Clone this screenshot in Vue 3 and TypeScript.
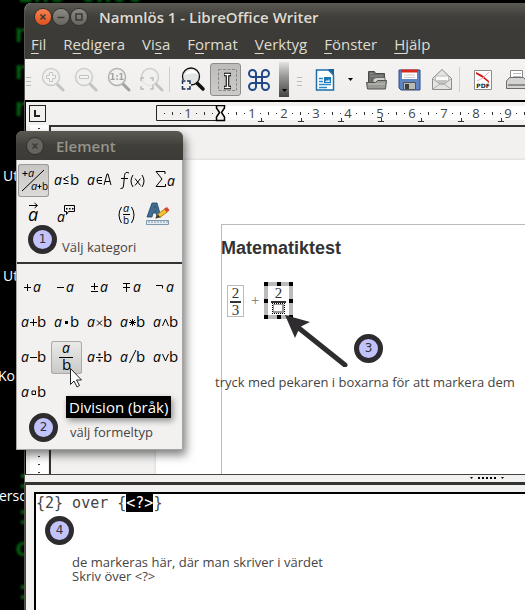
<script setup lang="ts">
import { onMounted, ref } from 'vue'

interface Glyph { t: string; x: number; y: number; s: number; up?: boolean }
interface Tile { name: string; glyphs: Glyph[]; path?: string; fill?: string; kind?: string; active?: boolean }

const A = (x = 4, y = 21, s = 14): Glyph => ({ t: 'a', x, y, s })
const B = (x = 20, y = 21, s = 15): Glyph => ({ t: 'b', x, y, s, up: true })

const categories: Tile[] = [
  { name: 'Unära/binära operatorer', active: true, path: 'M5 27 27 6M5.500 9.500h5M8 7v5M20.500 22.500h4M22.500 20.500v4', glyphs: [A(11, 13, 11), A(14, 26, 11), B(25, 26, 10)] },
  { name: 'Relationer', path: 'M18.500 12.500 13.500 15l5 2.500M13.500 19.500h5', glyphs: [A(4), B(20)] },
  { name: 'Mängdoperationer', path: 'M19 13.500h-3q-2 0-2 3t2 3h3M14 16.500h5M21 21l3-11h1l3 11M22 17.500h5', glyphs: [A(4)] },
  { name: 'Funktioner', path: 'M13 9q-4-2-4.500 2.500L7.500 22q0 3-3 2.500M5 14.500h7M17 11q-4 6 0 12M26 11q4 6 0 12M19 14.500l5.500 7M24.500 14.500l-5.500 7', glyphs: [] },
  { name: 'Operatorer', path: 'M16 10V7.500H7l6 7.500-6 7.500h9.500V20', glyphs: [A(18, 22)] },
  { name: 'Attribut', path: 'M12 6.500h8M17.500 4l3 2.500-3 2.500', glyphs: [A(11, 22, 18)] },
  { name: 'Övrigt', kind: 'bubble', glyphs: [A(7, 23)] },
  { name: '', glyphs: [] },
  { name: 'Klamrar', path: 'M5.500 8q-5 8 0 16M15.500 8q5 8 0 16M7 15.500h7', glyphs: [A(7, 13, 11), B(7, 25, 10)] },
  { name: 'Format', kind: 'format', glyphs: [] },
]

const formulas: Tile[] = [
  { name: 'Plus', path: 'M7 16.500h7M10.500 13v7', glyphs: [A(16)] },
  { name: 'Minus', path: 'M7 16.500h7', glyphs: [A(16)] },
  { name: 'Plus/minus', path: 'M8 15.500h7M11.500 12v7M8 20.500h7', glyphs: [A(17)] },
  { name: 'Minus/plus', path: 'M7 12.500h7M7 16.500h7M10.500 13v8', glyphs: [A(17)] },
  { name: 'Booleskt NOT', path: 'M7 14.500h6.500v3', glyphs: [A(17)] },
  { name: 'Addition', path: 'M13 16.500h7M16.500 13v7', glyphs: [A(), B()] },
  { name: 'Multiplikation (punkt)', fill: 'M15 15h3v3h-3z', glyphs: [A(), B()] },
  { name: 'Multiplikation (x)', path: 'M14 14.500l5 5M19 14.500l-5 5', glyphs: [A(), B()] },
  { name: 'Multiplikation (*)', path: 'M13 16.500h7M16.500 13v7M14 14l5 5M19 14l-5 5', glyphs: [A(), B()] },
  { name: 'Booleskt AND', path: 'M13.500 20 16.500 13l3 7', glyphs: [A(), B()] },
  { name: 'Subtraktion', path: 'M13 16.500h7', glyphs: [A(), B()] },
  { name: 'Division (bråk)', active: true, path: 'M9 16.500h14', glyphs: [A(12, 12), B(12, 29)] },
  { name: 'Division', path: 'M13 16.500h7', fill: 'M15.500 12.500h2v2h-2zM15.500 18.500h2v2h-2z', glyphs: [A(), B()] },
  { name: 'Division (snedstreck)', path: 'M13.500 22 20 9', glyphs: [A(), B()] },
  { name: 'Booleskt OR', path: 'M13.500 13l3 7 3-7', glyphs: [A(), B()] },
  { name: 'Konkatenera', path: 'M15 15h3.500v3.500h-3.500z', glyphs: [A(), B()] },
]

const menus: [string, string, string][] = [
  ['', 'F', 'il'], ['R', 'e', 'digera'], ['Vi', 's', 'a'], ['F', 'o', 'rmat'],
  ['', 'V', 'erktyg'], ['', 'F', 'önster'], ['', 'H', 'jälp'],
]

const unit = 32
const marks = Array.from({ length: 14 }, (_, i) => i + 1)
const tabs = Array.from({ length: 10 }, (_, i) => 105 + i * 40)

const command = ref('{2} over {<?>}')
const editor = ref<HTMLTextAreaElement | null>(null)
onMounted(() => {
  editor.value?.focus()
  editor.value?.setSelectionRange(10, 13)
})
</script>

<template>
  <main class="desktop">
    <div class="matrix" aria-hidden="true">
      <span class="g g-top">Ine 0x00</span>
      <span class="g g1">n</span><span class="g g2">n</span><span class="g g3">n</span>
      <span class="g g4">:</span><span class="g g5">:</span><span class="g g6">c</span><span class="g g7">:</span>
    </div>
    <span class="file f1">Ut</span>
    <span class="file f2">Ut</span>
    <span class="file f3">Ko</span>
    <span class="file f4">ersor</span>

    <section class="writer">
      <header class="titlebar">
        <button class="wbtn close" aria-label="Stäng"><svg viewBox="0 0 16 16"><path d="M5.500 5.500l5 5M10.500 5.500l-5 5" /></svg></button>
        <button class="wbtn" aria-label="Minimera"><svg viewBox="0 0 16 16"><path d="M4.500 8.500h7" /></svg></button>
        <button class="wbtn" aria-label="Maximera"><svg viewBox="0 0 16 16"><path d="M5 5h6v6H5z" /></svg></button>
        <h1>Namnlös 1 - LibreOffice Writer</h1>
      </header>

      <nav class="menubar">
        <button v-for="m in menus" :key="m.join('')">{{ m[0] }}<u>{{ m[1] }}</u>{{ m[2] }}</button>
      </nav>

      <div class="toolbar">
        <i class="grip"></i>
        <button class="tool dim" aria-label="Zooma in">
          <svg viewBox="0 0 32 32"><path class="handle" d="M20 20l6 6" /><circle cx="14" cy="13" r="8.500" /><path class="sign" d="M12.500 8.500h3v3h3v3h-3v3h-3v-3h-3v-3h3z" /></svg>
        </button>
        <button class="tool dim" aria-label="Zooma ut">
          <svg viewBox="0 0 32 32"><path class="handle" d="M20 20l6 6" /><circle cx="14" cy="13" r="8.500" /><path class="sign" d="M9.500 11.500h9v3h-9z" /></svg>
        </button>
        <button class="tool dim mid" aria-label="Zooma 1:1">
          <svg viewBox="0 0 32 32"><path class="handle" d="M20 20l6 6" /><circle cx="14" cy="13" r="8.500" /><text x="14" y="16" text-anchor="middle">1:1</text></svg>
        </button>
        <button class="tool dim" aria-label="Visa allt">
          <svg viewBox="0 0 32 32"><path class="handle" d="M20 20l6 6" /><circle cx="14" cy="13" r="8.500" /><path d="M4 14h12v12H4z" fill="#f2f1f0" opacity=".7" /><path class="corner" d="M5 17v-3h3M14 14h3v3M5 22v3h3M14 25h3v-3" /></svg>
        </button>
        <i class="rule"></i>
        <button class="tool" aria-label="Zoom">
          <svg viewBox="0 0 32 32">
            <path d="M20 19l6 6" stroke="#111" stroke-width="3.500" stroke-linecap="round" />
            <circle cx="14" cy="12.500" r="8.500" fill="#e4e6e6" stroke="#111" stroke-width="1.300" />
            <path d="M8 11q2-5 8-5 4 1 5 4-6-2-13 1z" fill="#fff" />
            <path d="M4 16h10v10H4z" fill="#f2f1f0" />
            <path d="M5.500 20v-3h3M10 17h3v3M5.500 22v3h3M10 25h3v-3" fill="none" stroke="#1d2f55" stroke-width="1.500" />
          </svg>
        </button>
        <button class="tool pressed" aria-label="Formelmarkör" aria-pressed="true">
          <svg viewBox="0 0 32 32">
            <path d="M7.500 5.500h18v21h-18z" fill="none" stroke="#888" stroke-dasharray="3 1.500" />
            <path d="M13 10.500h3l.5 1 .5-1h3M16.500 10.500v13M13 23.500h3l.5-1 .5 1h3" fill="none" stroke="#000" stroke-width="3.500" />
            <path d="M13.500 10.500H16l.5 1 .5-1h2.500M16.500 10.500v13M13.500 23.500H16l.5-1 .5 1h2.500" fill="none" stroke="#fff" stroke-width="1.400" />
          </svg>
        </button>
        <button class="tool" aria-label="Symboler">
          <svg viewBox="0 0 32 32"><path d="M13 13V9.500A3.500 3.500 0 1 0 9.500 13H22.500A3.500 3.500 0 1 0 19 9.500V22.500A3.500 3.500 0 1 0 22.500 19H9.500A3.500 3.500 0 1 0 13 22.500z" fill="none" stroke="#204a87" stroke-width="2" /></svg>
        </button>
        <button class="more" aria-label="Fler verktyg"><svg viewBox="0 0 5 3"><path d="M0 0h5L2.500 3z" /></svg></button>
        <i class="grip second"></i>
        <button class="tool" aria-label="Nytt">
          <svg viewBox="0 0 32 32">
            <path d="M7.500 6h12l5 5v15h-17z" fill="#fff" stroke="#1b6ea8" stroke-width="1.500" />
            <path d="M19 5h6v6z" fill="#17649c" />
            <path d="M10 14.500h4M10 17.500h4M10 20.500h12M10 23.500h8" stroke="#2b87c4" stroke-width="1.500" />
            <path d="M15 13h7v6h-7z" fill="#1b78b6" /><path d="M16 18l2-2 1 1 1-2 1 3z" fill="#d8eefa" />
          </svg>
        </button>
        <button class="caret" aria-label="Nytt, fler val"><svg viewBox="0 0 5 3"><path d="M0 0h5L2.500 3z" /></svg></button>
        <button class="tool" aria-label="Öppna">
          <svg viewBox="0 0 32 32">
            <path d="M8.500 22V7.500h6l1 2h9V22z" fill="#6c6d69" stroke="#494a47" />
            <path d="M10 9.500h3M10 12h13" stroke="#8d8e8a" />
            <path d="M16 13.500h9V20H13v-5z" fill="#d0d1cd" stroke="#666" />
            <path d="M6.500 18.500h9l2-2h9l-1 8.500h-18z" fill="#999a96" stroke="#51524f" /><path d="M8 20h17" stroke="#c2c3bf" />
          </svg>
        </button>
        <button class="tool" aria-label="Spara">
          <svg viewBox="0 0 32 32">
            <path d="M6 6h21v20H8l-2-2z" fill="#5e84c4" stroke="#2b4a83" />
            <path d="M9 6h15v9H9z" fill="#fff" /><path d="M8 5.500h17v3H8z" fill="#d8291f" />
            <path d="M11 11h11M11 13.500h11" stroke="#c8c8c8" />
            <path d="M10.500 18.500h12v7h-12z" fill="#b9bbb8" stroke="#555" /><path d="M12 20h4v5h-4z" fill="#3d3f3d" />
          </svg>
        </button>
        <button class="tool" aria-label="E-post">
          <svg viewBox="0 0 32 32">
            <path d="M6.500 14.500 16 5.500l9.500 9v11h-19z" fill="#e4e4e2" stroke="#8b8c89" />
            <path d="M9.500 17v-5h13v5L16 21z" fill="#fafafa" stroke="#bbb" />
            <path d="M10 16h12l-4 4h-4z" fill="#c4c4c2" />
            <path d="M7 25l7-5h4l7 5M7 15l7 5M25 15l-7 5" fill="none" stroke="#aaa" />
          </svg>
        </button>
        <i class="rule"></i>
        <button class="tool" aria-label="Exportera som PDF">
          <svg viewBox="0 0 32 32">
            <path d="M7.500 6.500h17v19h-17z" fill="#fff" stroke="#8c8c8c" />
            <path d="M9 8l6 3 7 6v2l-6-5-7-4z" fill="#d11d1d" /><path d="M22 8l-6 6-6 3" stroke="#eeb0b0" fill="none" />
            <text x="16" y="24" font-size="6" font-weight="700" text-anchor="middle">PDF</text>
          </svg>
        </button>
        <button class="tool" aria-label="Skriv ut">
          <svg viewBox="0 0 32 32">
            <path d="M10.500 15V6.500h12V15" fill="#fff" stroke="#8b8b8b" /><path d="M13 9.500h8M13 12.500h8" stroke="#bbb" />
            <path d="M6.500 17l3-3.500h14l3 3.500v7.500h-20z" fill="#d4d4d2" stroke="#6c6c6a" /><path d="M8 21h17" stroke="#777" stroke-width="1.500" />
          </svg>
        </button>
      </div>

      <div class="workspace">
        <div class="ruler-row">
          <button class="tabstop" aria-label="Tabbtyp"><svg viewBox="0 0 15 15"><path d="M5 4v6h5" /></svg></button>
          <svg class="ruler" width="371" height="20" aria-hidden="true">
            <path d="M65 1h306v14H65z" fill="#fff" />
            <path d="M65 .5H.5v15H65" fill="none" stroke="#222" />
            <g v-for="n in marks" :key="n" :transform="`translate(${n * unit - 32} 0)`">
              <path class="tick" d="M8 8h1v1H8zM16 7h1v3h-1zM24 8h1v1h-1z" />
            </g>
            <text x="32" y="13">1</text>
            <text v-for="n in 9" :key="n" :x="64 + n * unit" y="13">{{ n }}</text>
            <path v-for="x in tabs" :key="x" class="tab" :d="`M${x - 3} 16.500h6M${x}.5 13v3`" />
            <path d="M60.500.5h8v2.500l-3 4.500 3 4.500v3.500h-8V12l3-4.500-3-4.500z" fill="#f2f1f0" stroke="#000" stroke-width="1.500" />
          </svg>
        </div>
        <div class="doc-row">
          <div class="vruler"><i></i></div>
          <div class="canvas">
            <article class="page">
              <div class="text-area">
                <h2>Matematiktest</h2>
                <div class="formula">
                  <span class="frac"><span>2</span><span class="den">3</span></span>
                  <span class="plus">+</span>
                  <span class="frac object">
                    <span>2</span><span class="den"><i class="slot"></i></span>
                    <i v-for="h in 8" :key="h" class="knob" :class="`k${h}`"></i>
                  </span>
                </div>
              </div>
            </article>
          </div>
        </div>
      </div>

      <div class="splitter">
        <svg viewBox="0 0 35 3"><path d="M0 0h3L1.500 2zM8 0h2v2H8zM12 0h2v2h-2zM16 0h2v2h-2zM20 0h2v2h-2zM24 0h2v2h-2zM31 0h3l-1.500 2z" /></svg>
      </div>
      <div class="command">
        <textarea ref="editor" v-model="command" aria-label="Formelkommando" spellcheck="false"></textarea>
      </div>
    </section>

    <aside class="palette">
      <header class="titlebar">
        <button class="wbtn" aria-label="Stäng Element"><svg viewBox="0 0 16 16"><path d="M5.500 5.500l5 5M10.500 5.500l-5 5" /></svg></button>
        <h2>Element</h2>
      </header>
      <div v-for="(group, gi) in [categories, formulas]" :key="gi" class="tiles">
        <template v-for="(tile, ti) in group" :key="ti">
          <span v-if="!tile.name"></span>
          <button v-else :class="{ active: tile.active }" :aria-label="tile.name">
            <svg viewBox="1 1 32 32">
              <text v-for="(g, k) in tile.glyphs" :key="k" :x="g.x" :y="g.y" :font-size="g.s" :class="{ up: g.up }">{{ g.t }}</text>
              <path v-if="tile.path" :d="tile.path" class="line" />
              <path v-if="tile.fill" :d="tile.fill" />
              <template v-if="tile.kind === 'bubble'">
                <path class="line" d="M14.500 6.500h10v6h-6l-2 3v-3h-2z" /><path d="M16 9h1.500v1.500H16zM19 9h1.500v1.500H19zM22 9h1.500v1.500H22z" />
              </template>
              <template v-if="tile.kind === 'format'">
                <path d="M-2 18 3 4h5l4 14H8l-1-4H4l-1 4zM5 11h2L6 7z" fill="#3f6d92" stroke="#1e4262" stroke-width=".8" />
                <path d="M-2.500 21.500h22v4h-22z" fill="#e3edf3" stroke="#7e99ab" /><path d="M0 22v2M3 22v2M6 22v2M9 22v2M12 22v2M15 22v2M18 22v2" stroke="#7e99ab" />
                <path d="M7 19l2-4 8-6 2.500 3-8 6z" fill="#f4c430" stroke="#a07010" stroke-width=".8" /><path d="M15 10l3-2 2.500 3-3 2z" fill="#d9452f" /><path d="M6 19.500l3-4 2 2.500z" fill="#333" />
              </template>
            </svg>
          </button>
        </template>
      </div>
    </aside>

    <div class="tooltip" role="tooltip">Division (bråk)</div>
    <svg class="pointer" viewBox="0 0 13 21" aria-hidden="true"><path d="M1.500 1.500v16l3.500-3.500 3 6 2.500-1.500-3-5.500h5z" /></svg>

    <svg class="arrow" viewBox="0 0 64 52" aria-hidden="true"><path d="M10 10l50 40" class="shaft" /><path d="M0 0l25 7-10 5-5 11z" /></svg>
    <b class="badge b1">1</b><p class="note n1">Välj kategori</p>
    <b class="badge b2">2</b><p class="note n2">välj formeltyp</p>
    <b class="badge b3">3</b><p class="note n3">tryck med pekaren i boxarna för att markera dem</p>
    <b class="badge b4">4</b><p class="note n4">de markeras här, där man skriver i värdet<br />Skriv över &lt;?&gt;</p>
  </main>
</template>

<style>
body { margin: 0; background: #000; }
</style>

<style scoped>
* { box-sizing: border-box; }
.desktop { position: relative; min-height: 100vh; overflow: hidden; background: #000; font-family: "Open Sans", "Noto Sans", sans-serif; font-size: 15px; }
button { margin: 0; padding: 0; border: 0; background: none; font: inherit; color: inherit; }
h1, h2, p { margin: 0; }
svg { display: block; }

.g { position: absolute; left: 15px; color: #008215; font: bold 26px/30px "Liberation Mono", monospace; filter: blur(1px); opacity: .75; }
.g-top { top: -20px; left: 18px; white-space: pre; }
.g1 { top: 20px; } .g2 { top: 57px; } .g3 { top: 94px; }
.g4 { top: 466px; } .g5 { top: 502px; } .g6 { top: 534px; } .g7 { top: 577px; }
.file { position: absolute; left: 0; color: #fff; font-size: 14px; line-height: 20px; }
.f1 { left: 3px; top: 166px; } .f2 { left: 3px; top: 266px; } .f3 { left: -2px; top: 366px; } .f4 { left: -1px; top: 486px; }

.writer { position: absolute; inset: 3px 0 0 24px; display: flex; flex-direction: column; overflow: hidden; border-left: 1px solid #55544e; border-radius: 7px 0 0 0; background: #f2f1f0; }
.titlebar { display: flex; align-items: center; flex: none; height: 28px; padding-left: 10px; gap: 2px; background: linear-gradient(#5a5952, #403f3a 50%, #3c3b37); color: #dfdbd2; }
.titlebar h1 { margin-left: 10px; font-size: 15px; font-weight: 600; line-height: 20px; white-space: nowrap; }
.wbtn { width: 16px; height: 16px; border-radius: 50%; background: linear-gradient(#8b8a83, #66655f); box-shadow: 0 0 0 1px #33322e; }
.wbtn path { fill: none; stroke: #3a3935; stroke-width: 1.500; }
.wbtn.close { background: linear-gradient(#f5844f, #e0501b); }
.menubar { display: flex; flex: none; height: 28px; padding-left: 6px; gap: 17px; background: #3c3b37; color: #dfdbd2; line-height: 26px; }
.menubar button { display: block; height: 26px; }
.menubar u { text-underline-offset: 3px; text-decoration-thickness: 1px; }

.toolbar { display: flex; align-items: center; flex: none; height: 41px; background: linear-gradient(#f4f3f2, #efeeec); }
.toolbar > * { flex: none; }
.grip { width: 5px; height: 9px; margin: 4px 5px 0 1px; background: repeating-linear-gradient(#bbb 0 1px, transparent 1px 4px); }
.grip.second { margin: 4px 6px 0 8px; }
.tool { display: grid; place-items: center; width: 33px; height: 33px; }
.tool svg { width: 32px; height: 32px; }
.tool text { font-family: "DejaVu Sans", sans-serif; fill: #222; }
.dim { opacity: .5; }
.dim circle { fill: #f0f0ef; stroke: #aaa; stroke-width: 1.500; }
.dim .handle { stroke: #999; stroke-width: 3; stroke-linecap: round; }
.dim .sign { fill: #fafafa; stroke: #999; }
.dim .corner { fill: none; stroke: #888; stroke-width: 1.500; }
.dim.mid { opacity: .9; }
.dim.mid text { font-size: 8px; font-weight: 700; fill: #999; }
.rule { width: 8px; height: 25px; background: linear-gradient(90deg, transparent 1px, #d0cfcd 1px 2px, transparent 2px); }
.pressed { width: 31px; margin: 0 1px; border: 1px solid #8d8c8a; border-radius: 3px; background: linear-gradient(#bdbcba, #cccbc9); }
.more { display: flex; align-items: flex-end; justify-content: center; width: 10px; height: 35px; margin-left: 4px; padding-bottom: 5px; background: linear-gradient(#e2e2e1, #9a9a99 40%, #444); }
.more svg, .caret svg { width: 5px; height: 3px; }
.caret { display: grid; place-items: center; width: 18px; height: 33px; }

.workspace { display: flex; flex-direction: column; flex: none; border-top: 2px solid #000; border-left: 1px solid #000; background: #f2f1f0; }
.ruler-row { display: flex; align-items: flex-start; height: 23px; padding: 3px 0 0 3px; overflow: hidden; }
.tabstop { flex: none; width: 17px; height: 17px; border: 1px solid #222; }
.tabstop svg { width: 15px; height: 15px; }
.tabstop path { fill: none; stroke: #222; stroke-width: 2; }
.ruler { flex: none; margin-left: 110px; }
.ruler text { font-size: 13px; text-anchor: middle; fill: #444; }
.tick { fill: #333; }
.tab { stroke: #333; fill: none; }
.doc-row { display: flex; }
.vruler { flex: none; width: 23px; padding: 0 1px 0 4px; }
.vruler i { display: block; height: 100%; background: repeating-linear-gradient(#333 0 1px, transparent 1px 8px) 8px 3px / 2px 100% no-repeat, #fff; }
.canvas { flex: 1; padding: 33px 0 0 105px; border-top: 2px solid #333; border-left: 2px solid #333; overflow: hidden; }
.page { min-height: 314px; padding: 64px 0 0 65px; background: #fff; box-shadow: 0 0 2px 1px #ddd; }
.text-area { min-height: 250px; padding-top: 12px; border: solid #bbb; border-width: 1px 0 0 1px; }
.text-area h2 { margin-left: -1px; color: #333; font: bold 18px/22px "Liberation Sans", Arial, sans-serif; }
.formula { display: flex; align-items: center; gap: 7px; padding: 23px 0 0 5px; font: 15px/15px "Liberation Serif", serif; color: #333; }
.frac { display: flex; flex-direction: column; width: 17px; height: 32px; padding: 0 2px; border: 1px solid #bbb; text-align: center; }
.den { border-top: 2px solid #333; }
.plus { width: 8px; color: #777; text-align: center; }
.object { position: relative; width: 29px; height: 37px; padding: 0 3px; border: 4px solid #bbb; margin-left: -2px; }
.object .den { padding: 0 1px; }
.slot { display: block; width: 13px; height: 11px; border: 1px dotted #000; background: #fff; box-shadow: inset -2px -2px #999, inset 1px 1px #999; }
.knob { position: absolute; width: 4px; height: 4px; background: #000; }
.k1, .k4, .k6 { left: -4px; } .k2, .k7 { left: 9px; } .k3, .k5, .k8 { right: -4px; }
.k1, .k2, .k3 { top: -4px; } .k4, .k5 { top: 13px; } .k6, .k7, .k8 { bottom: -4px; }

.splitter { display: flex; justify-content: flex-end; flex: none; height: 8px; padding: 2px 20px 0 0; border-top: 1px solid #444; background: #f2f1f0; }
.splitter svg { width: 35px; height: 3px; }
.command { display: flex; flex: 1; padding: 7px 0 0 8px; border-top: 3px solid #333; border-left: 1px solid #444; background: #f2f1f0; }
.command textarea { flex: 1; min-width: 0; padding: 0; border: solid #000; border-width: 2px 0 0 2px; outline: 0; resize: none; background: #fff; color: #444; font: 15px/18px "DejaVu Sans Mono", monospace; }
.command textarea::selection { background: #000; color: #fff; }

.palette { position: absolute; left: 16px; top: 131px; width: 167px; height: 319px; border: solid #a5a4a1; border-width: 0 1px 1px; border-radius: 7px 7px 0 0; background: #f2f1f0; box-shadow: 3px 5px 10px rgba(0, 0, 0, .5); }
.palette .titlebar { height: 29px; border-radius: 6px 6px 0 0; margin: 0 -1px; padding-left: 11px; color: #96948c; }
.palette .wbtn { background: #66655f; }
.palette h2 { margin-left: 11px; font-size: 15px; font-weight: 600; }
.tiles { display: grid; grid-template-columns: repeat(5, 33px); grid-auto-rows: 35px; place-items: center; padding-top: 3px; }
.tiles + .tiles { margin-top: 29px; padding-top: 6px; border-top: 2px solid #333; }
.tiles button { display: grid; place-items: center; width: 31px; height: 33px; border-radius: 3px; }
.tiles svg { width: 32px; height: 32px; overflow: visible; }
.tiles text { font-family: "Open Sans", sans-serif; font-style: italic; }
.tiles text.up { font-style: normal; }
.tiles .line { fill: none; stroke: #000; }
.active { background: linear-gradient(#c6c5c3, #dcdbd9); box-shadow: inset 0 0 0 1px #999; }
.tiles + .tiles .active { background: linear-gradient(#ebebea, #c8c8c7); box-shadow: inset 0 0 0 1px #aaa; }

.tooltip { position: absolute; left: 66px; top: 396px; padding: 0 3px; background: #000; color: #fff; line-height: 22px; box-shadow: 2px 3px 6px rgba(0, 0, 0, .4); white-space: nowrap; }
.pointer { position: absolute; left: 69px; top: 367px; width: 13px; height: 21px; fill: #fff; stroke: #222; }
.arrow { position: absolute; left: 285px; top: 315px; width: 64px; height: 52px; fill: #2e2c2e; }
.shaft { stroke: #2e2c2e; stroke-width: 5; stroke-linecap: round; }
.badge { position: absolute; width: 29px; height: 29px; border: 5px solid #2e2c2e; border-radius: 50%; background: #c3c3fb; color: #333; font: 12px/19px "DejaVu Sans", sans-serif; text-align: center; }
.note { position: absolute; color: #444; font-size: 13px; line-height: 14px; white-space: nowrap; }
.b1 { left: 28px; top: 225px; } .n1 { left: 62px; top: 240px; }
.b2 { left: 29px; top: 413px; } .n2 { left: 70px; top: 425px; }
.b3 { left: 354px; top: 334px; } .n3 { left: 215px; top: 375px; }
.b4 { left: 45px; top: 516px; } .n4 { left: 72px; top: 555px; }
</style>
